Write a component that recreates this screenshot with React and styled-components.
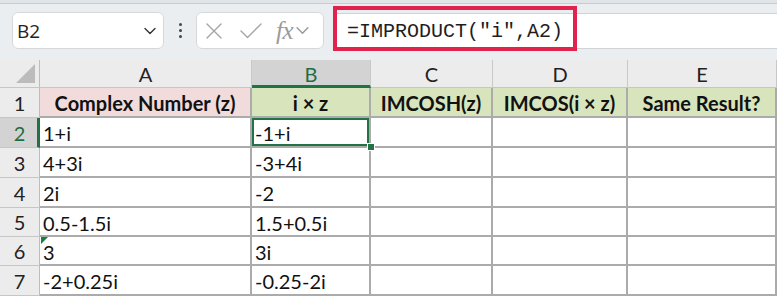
import React from "react";
import styled, { createGlobalStyle } from "styled-components";

const Global = createGlobalStyle`
  html, body { margin: 0; padding: 0; background: #ffffff; }
  body { width: 777px; height: 298px; overflow: hidden; }
`;

const Page = styled.div`
  width: 777px;
  height: 298px;
  position: relative;
  overflow: hidden;
  background: #ffffff;
  font-family: "Lato", "Open Sans", sans-serif;
`;

const TopStrip = styled.div`
  height: 3px;
  background: #e2e5e8;
  border-bottom: 1px solid #c9ccd0;
`;

const Toolbar = styled.div`
  height: 56px;
  background: #ebeef1;
  display: flex;
  align-items: flex-start;
  padding: 8px 0 0 12px;
  box-sizing: border-box;
`;

const NameBox = styled.div`
  width: 152px;
  height: 37px;
  box-sizing: border-box;
  background: #ffffff;
  border: 1px solid #d6d9dc;
  border-radius: 6px;
  display: flex;
  align-items: center;
  justify-content: space-between;
  padding: 0 6px 0 4px;
  font-family: "Open Sans", "Noto Sans", sans-serif;
  font-size: 19px;
  color: #222;
`;

const Dots = styled.div`
  width: 32px;
  height: 37px;
  display: flex;
  flex-direction: column;
  align-items: center;
  justify-content: center;
  gap: 3px;
  span {
    width: 3px;
    height: 3px;
    border-radius: 50%;
    background: #444;
  }
`;

const FxBox = styled.div`
  width: 128px;
  height: 37px;
  box-sizing: border-box;
  background: #ffffff;
  border: 1px solid #d6d9dc;
  border-radius: 6px;
  display: flex;
  align-items: center;
  padding: 0 4px 0 8px;
`;

const FxText = styled.span`
  font-family: "Liberation Serif", "DejaVu Serif", serif;
  font-style: italic;
  font-size: 25px;
  color: #9a9a9a;
  margin: 0 2px 0 13px;
  line-height: 1;
  letter-spacing: -0.5px;
`;

const FormulaBar = styled.div`
  flex: 1;
  height: 36px;
  margin-left: 10px;
  margin-top: 1px;
  box-sizing: border-box;
  background: #ffffff;
  border-top: 1px solid #d0d3d6;
  border-bottom: 1px solid #d0d3d6;
  display: flex;
  align-items: center;
  padding-left: 13px;
  font-family: "Liberation Mono", "DejaVu Sans Mono", monospace;
  font-size: 20px;
  color: #1e1e1e;
  white-space: pre;
`;

const Highlight = styled.div`
  position: absolute;
  left: 333px;
  top: 6px;
  width: 244px;
  height: 45px;
  box-sizing: border-box;
  border: 4px solid #e0224c;
  pointer-events: none;
`;

const Sheet = styled.div`
  display: grid;
  grid-template-columns: 40px 212px 119px 122px 135px 149px;
  grid-template-rows: 28px 30px 30px 30px 30px 29px 29px 30px;
`;

const Corner = styled.div`
  position: relative;
  background: #ececec;
  border-right: 1px solid #bdbdbd;
  border-bottom: 1px solid #c6c6c6;
  box-sizing: border-box;
  &::after {
    content: "";
    position: absolute;
    right: 4px;
    bottom: 4px;
    width: 0;
    height: 0;
    border-left: 19px solid transparent;
    border-bottom: 19px solid #bcbcbc;
  }
`;

const ColHead = styled.div`
  box-sizing: border-box;
  background: ${(p) => (p.$active ? "#d3d3d3" : "#ececec")};
  color: ${(p) => (p.$active ? "#1f6e43" : "#222")};
  border-right: 1px solid #c9c9c9;
  border-bottom: ${(p) => (p.$active ? "3px solid #217346" : "1px solid #c6c6c6")};
  display: flex;
  align-items: center;
  justify-content: center;
  font-size: 20px;
  padding-top: ${(p) => (p.$active ? "2px" : "0")};
`;

const RowHead = styled.div`
  box-sizing: border-box;
  background: ${(p) => (p.$active ? "#d3d3d3" : "#ececec")};
  color: ${(p) => (p.$active ? "#1f6e43" : "#222")};
  border-right: ${(p) => (p.$active ? "3px solid #217346" : "1px solid #bdbdbd")};
  border-bottom: 1px solid #c6c6c6;
  display: flex;
  align-items: center;
  justify-content: center;
  font-size: 20px;
  padding-left: ${(p) => (p.$active ? "2px" : "0")};
`;

const Cell = styled.div`
  position: relative;
  box-sizing: border-box;
  background: ${(p) => p.$bg || "#ffffff"};
  border-right: 2px solid #ababab;
  border-bottom: 2px solid #ababab;
  display: flex;
  align-items: center;
  justify-content: ${(p) => (p.$head ? "center" : "flex-start")};
  padding-left: ${(p) => (p.$head ? "0" : "3px")};
  padding-top: 2px;
  font-size: 20px;
  font-weight: ${(p) => (p.$head ? 700 : 400)};
  color: #111;
  white-space: nowrap;
  ${(p) => p.$selected && `box-shadow: inset 0 0 0 2px #217346;`}
`;

const Handle = styled.span`
  position: absolute;
  right: -6px;
  bottom: -5px;
  width: 6px;
  height: 6px;
  background: #217346;
  border: 1px solid #ffffff;
  z-index: 2;
`;

const ErrorMark = styled.span`
  position: absolute;
  left: 1px;
  top: 0;
  width: 0;
  height: 0;
  border-top: 7px solid #1e7d3c;
  border-right: 7px solid transparent;
`;

const Chevron = ({ color = "#333", size = 14 }) => (
  <svg width={size} height={size} viewBox="0 0 14 14" fill="none">
    <path d="M2 4.5 L7 9.5 L12 4.5" stroke={color} strokeWidth="1.4" strokeLinecap="round" strokeLinejoin="round" />
  </svg>
);

const CrossIcon = () => (
  <svg width="18" height="18" viewBox="0 0 18 18" fill="none">
    <path d="M2 2 L16 16 M16 2 L2 16" stroke="#a4a4a4" strokeWidth="1.4" strokeLinecap="round" />
  </svg>
);

const CheckIcon = () => (
  <svg width="24" height="18" viewBox="0 0 24 18" fill="none">
    <path d="M2 9 L8.5 15.5 L22 2" stroke="#a4a4a4" strokeWidth="1.4" strokeLinecap="round" strokeLinejoin="round" />
  </svg>
);

const IconGap = styled.span`
  display: inline-block;
  width: ${(p) => p.$w}px;
`;

const columns = ["A", "B", "C", "D", "E"];
const heads = [
  { t: "Complex Number (z)", bg: "#f2dcdb" },
  { t: "i × z", bg: "#d8e4bc" },
  { t: "IMCOSH(z)", bg: "#d8e4bc" },
  { t: "IMCOS(i × z)", bg: "#d8e4bc" },
  { t: "Same Result?", bg: "#d8e4bc" },
];
const data = [
  ["1+i", "-1+i"],
  ["4+3i", "-3+4i"],
  ["2i", "-2"],
  ["0.5-1.5i", "1.5+0.5i"],
  ["3", "3i"],
  ["-2+0.25i", "-0.25-2i"],
];

export default function App() {
  return (
    <Page>
      <Global />
      <TopStrip />
      <Toolbar>
        <NameBox>
          <span>B2</span>
          <Chevron />
        </NameBox>
        <Dots>
          <span />
          <span />
          <span />
        </Dots>
        <FxBox>
          <CrossIcon />
          <IconGap $w={16} />
          <CheckIcon />
          <FxText>fx</FxText>
          <Chevron color="#9a9a9a" size={15} />
        </FxBox>
        <FormulaBar>=IMPRODUCT("i",A2)</FormulaBar>
      </Toolbar>
      <Highlight />
      <Sheet>
        <Corner />
        {columns.map((c) => (
          <ColHead key={c} $active={c === "B"}>
            {c}
          </ColHead>
        ))}
        <RowHead>1</RowHead>
        {heads.map((h) => (
          <Cell key={h.t} $head $bg={h.bg}>
            {h.t}
          </Cell>
        ))}
        {data.map((row, i) => {
          const r = i + 2;
          return (
            <React.Fragment key={r}>
              <RowHead $active={r === 2}>{r}</RowHead>
              <Cell>
                {r === 6 && <ErrorMark />}
                {row[0]}
              </Cell>
              <Cell $selected={r === 2}>
                {row[1]}
                {r === 2 && <Handle />}
              </Cell>
              <Cell />
              <Cell />
              <Cell />
            </React.Fragment>
          );
        })}
      </Sheet>
    </Page>
  );
}
